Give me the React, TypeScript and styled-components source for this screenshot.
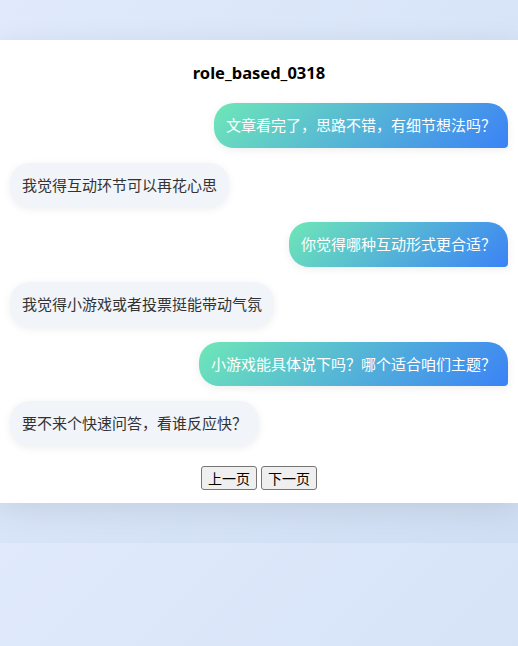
import React from "react";
import styled, { createGlobalStyle } from "styled-components";

const GlobalStyle = createGlobalStyle`
  html, body { margin: 0; }
  body {
    padding: 40px 0;
    background: linear-gradient(135deg, #e0eafc 0%, #cfdef3 100%);
    font-family: "Microsoft YaHei", "Noto Sans CJK SC", "Noto Sans", sans-serif;
  }
`;

const Card = styled.div`
  max-width: 600px;
  margin: 0 auto;
  background: #ffffff;
  box-shadow: 0 6px 28px rgba(0, 0, 0, 0.09);
  padding: 21px 10px 13px;
  box-sizing: border-box;
`;

const Title = styled.h2`
  margin: 0 0 18px;
  text-align: center;
  font-family: "Noto Sans", "Noto Sans CJK SC", sans-serif;
  font-size: 16.5px;
  line-height: 24px;
  font-weight: 700;
  color: #000;
`;

const Messages = styled.div`
  display: flex;
  flex-direction: column;
  gap: 15px;
`;

const Bubble = styled.div<{ $user?: boolean }>`
  align-self: ${(p) => (p.$user ? "flex-end" : "flex-start")};
  max-width: 75%;
  padding: 12px;
  font-size: 15px;
  line-height: 20.625px;
  color: ${(p) => (p.$user ? "#ffffff" : "#333333")};
  background: ${(p) =>
    p.$user ? "linear-gradient(135deg, #6ee7b7 0%, #3b82f6 100%)" : "#f1f4f9"};
  border-radius: ${(p) => (p.$user ? "20px 20px 4px 20px" : "20px 20px 20px 20px")};
  box-shadow: 0 2px 8px rgba(0, 0, 0, 0.07);
`;

const Pager = styled.div`
  margin-top: 20px;
  display: flex;
  justify-content: center;
  gap: 4px;
`;

const PageButton = styled.button`
  height: 24px;
  padding: 1px 6px;
  font-family: "Microsoft YaHei", "Noto Sans CJK SC", sans-serif;
  font-size: 14px;
  line-height: 20px;
  color: #000;
  background: #efefef;
  border: 1px solid #767676;
  border-radius: 3px;
  box-sizing: border-box;
`;

const messages: { user: boolean; text: string }[] = [
  { user: true, text: "文章看完了，思路不错，有细节想法吗？" },
  { user: false, text: "我觉得互动环节可以再花心思" },
  { user: true, text: "你觉得哪种互动形式更合适？" },
  { user: false, text: "我觉得小游戏或者投票挺能带动气氛" },
  { user: true, text: "小游戏能具体说下吗？哪个适合咱们主题？" },
  { user: false, text: "要不来个快速问答，看谁反应快？" },
];

export default function App() {
  return (
    <>
      <GlobalStyle />
      <Card>
        <Title>role_based_0318</Title>
        <Messages>
          {messages.map((m, i) => (
            <Bubble key={i} $user={m.user}>
              {m.text}
            </Bubble>
          ))}
        </Messages>
        <Pager>
          <PageButton>上一页</PageButton>
          <PageButton>下一页</PageButton>
        </Pager>
      </Card>
    </>
  );
}
